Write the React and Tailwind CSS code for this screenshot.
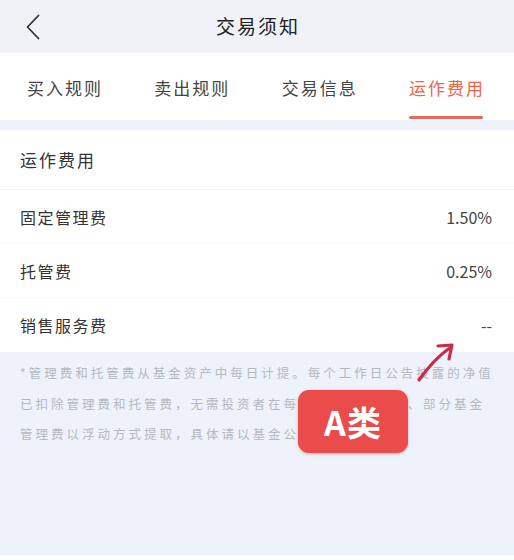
import React from 'react';

const font = { fontFamily: '"Noto Sans CJK SC", "Noto Sans", sans-serif' };

const tabs = ['买入规则', '卖出规则', '交易信息', '运作费用'];

const fees = [
    { name: '固定管理费', value: '1.50%' },
    { name: '托管费', value: '0.25%' },
    { name: '销售服务费', value: '--' },
];

export default function App() {
    return (
        <div className="w-[514px] h-[560px] bg-[#eef2fa] flex flex-col overflow-hidden text-[#333]" style={font}>
            {/* header */}
            <div className="h-[53px] bg-[#f1f1f8] flex items-center relative shrink-0">
                <div className="pl-[26px] flex items-center">
                    <svg width="14" height="26" viewBox="0 0 14 26" fill="none">
                        <path d="M12.5 1.5 L1.5 13 L12.5 24.5" stroke="#333" strokeWidth="1.8" strokeLinecap="round" strokeLinejoin="round" />
                    </svg>
                </div>
                <div className="absolute inset-0 flex items-center justify-center text-[19px] text-[#222] tracking-[2px] pl-[2px] pointer-events-none">
                    交易须知
                </div>
            </div>

            {/* tabs */}
            <div className="h-[67px] bg-white flex items-stretch justify-between pl-[27px] pr-[29px] shrink-0">
                {tabs.map((t, i) => (
                    <div key={t} className="flex flex-col items-center justify-center relative">
                        <span className={`text-[17px] tracking-[2px] pt-[2px] ${i === 3 ? 'text-[#e8654e]' : 'text-[#444]'}`}>{t}</span>
                        {i === 3 && <div className="absolute bottom-[1px] left-0 right-[2px] h-[3px] rounded-full bg-[#e86a5a]" />}
                    </div>
                ))}
            </div>

            <div className="h-[10px] shrink-0" />

            {/* fee card */}
            <div className="bg-white shrink-0">
                <div className="h-[60px] flex items-center px-[20px] text-[17px] text-[#333] tracking-[2px] border-b border-[#f2f3f6]">
                    运作费用
                </div>
                {fees.map((f, i) => (
                    <div key={f.name} className={`h-[54px] flex items-center justify-between px-[20px] text-[16px] ${i < fees.length - 1 ? 'border-b border-[#f6f7f9]' : ''}`}>
                        <span className="tracking-[1.5px] text-[#333]">{f.name}</span>
                        <span className="text-[#444] pr-[2px]">{f.value}</span>
                    </div>
                ))}
            </div>

            {/* note */}
            <div className="relative flex-1">
                <div className="pt-[6px] pl-[20px] text-[12.5px] leading-[30.5px] text-[#b5b9c2] tracking-[3px]">
                    <div className="whitespace-nowrap">*管理费和托管费从基金资产中每日计提。每个工作日公告披露的净值</div>
                    <div className="whitespace-nowrap">已扣除管理费和托管费，无需投资者在每笔交易中另付费、部分基金</div>
                    <div className="whitespace-nowrap">管理费以浮动方式提取，具体请以基金公告为准。</div>
                </div>

                {/* annotation arrow */}
                <svg className="absolute left-[412px] top-[-12px]" width="48" height="46" viewBox="0 0 48 46" fill="none">
                    <path d="M7 40 C 14 30, 26 16, 39 7" stroke="#c92c47" strokeWidth="3.2" strokeLinecap="round" />
                    <path d="M26 6 L40 5 L37 19" stroke="#c92c47" strokeWidth="3.2" strokeLinecap="round" strokeLinejoin="round" />
                </svg>

                {/* badge */}
                <div className="absolute left-[298px] top-[38px] w-[110px] h-[63px] rounded-[11px] bg-[#ea4b4b] shadow-[0_1px_3px_rgba(180,40,40,0.35)] flex items-center justify-center text-white text-[34px] font-bold tracking-[1px]">
                    A类
                </div>
            </div>
            <div className="h-[5px] bg-white shrink-0" />
        </div>
    );
}
